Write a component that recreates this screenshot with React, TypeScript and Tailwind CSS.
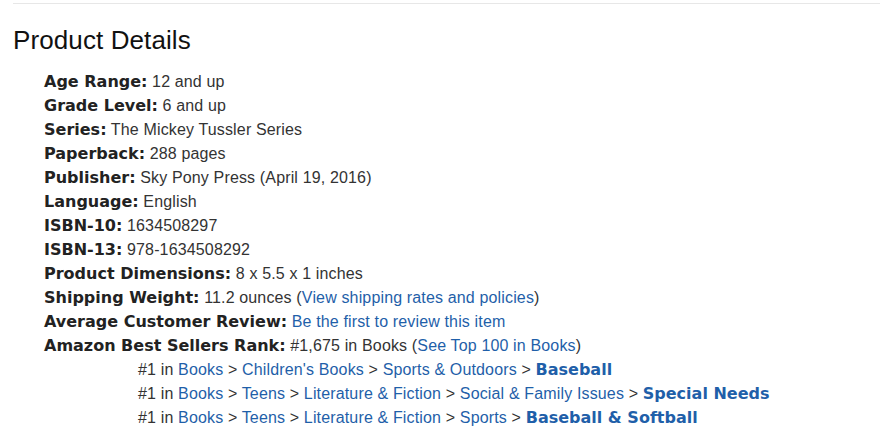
const label = "font-['DejaVu_Sans','Verdana',sans-serif] font-bold text-[16px] tracking-normal text-[#222]";
const link = "text-[#1f5fa9]";
const boldLink = "font-['DejaVu_Sans','Verdana',sans-serif] font-bold text-[16px] tracking-normal text-[#1f5fa9]";

type Row = { label: string; value: React.ReactNode };

const rows: Row[] = [
  { label: 'Age Range:', value: '12 and up' },
  { label: 'Grade Level:', value: '6 and up' },
  { label: 'Series:', value: 'The Mickey Tussler Series' },
  { label: 'Paperback:', value: '288 pages' },
  { label: 'Publisher:', value: 'Sky Pony Press (April 19, 2016)' },
  { label: 'Language:', value: 'English' },
  { label: 'ISBN-10:', value: '1634508297' },
  { label: 'ISBN-13:', value: '978-1634508292' },
  { label: 'Product Dimensions:', value: '8 x 5.5 x 1 inches' },
  {
    label: 'Shipping Weight:',
    value: (
      <>
        11.2 ounces (<a className={link}>View shipping rates and policies</a>)
      </>
    ),
  },
  {
    label: 'Average Customer Review:',
    value: <a className={link}>Be the first to review this item</a>,
  },
];

const ranks: { path: string[]; last: string }[] = [
  { path: ['Books', "Children's Books", 'Sports & Outdoors'], last: 'Baseball' },
  { path: ['Books', 'Teens', 'Literature & Fiction', 'Social & Family Issues'], last: 'Special Needs' },
  { path: ['Books', 'Teens', 'Literature & Fiction', 'Sports'], last: 'Baseball & Softball' },
];

export default function App() {
  return (
    <div className="w-[880px] h-[442px] bg-white overflow-hidden font-['Liberation_Sans',Arial,sans-serif] text-[16px] text-[#333]">
      <div className="ml-[13px] mt-[3px] border-t border-[#e7e7e7]" />
      <h2 className="ml-[13px] mt-[20px] text-[26px] leading-[32px] tracking-[0.1px] text-[#111]">Product Details</h2>
      <ul className="ml-[44px] mt-[14px] leading-[24px] tracking-[0.15px]">
        {rows.map((r) => (
          <li key={r.label}>
            <span className={label}>{r.label}</span> {r.value}
          </li>
        ))}
        <li>
          <span className={label}>Amazon Best Sellers Rank:</span> #1,675 in Books (
          <a className={link}>See Top 100 in Books</a>)
          <ul className="ml-[94px]">
            {ranks.map((rk) => (
              <li key={rk.last}>
                #1 in{' '}
                {rk.path.map((p) => (
                  <span key={p}>
                    <a className={link}>{p}</a> &gt;{' '}
                  </span>
                ))}
                <a className={boldLink}>{rk.last}</a>
              </li>
            ))}
          </ul>
        </li>
      </ul>
    </div>
  );
}
